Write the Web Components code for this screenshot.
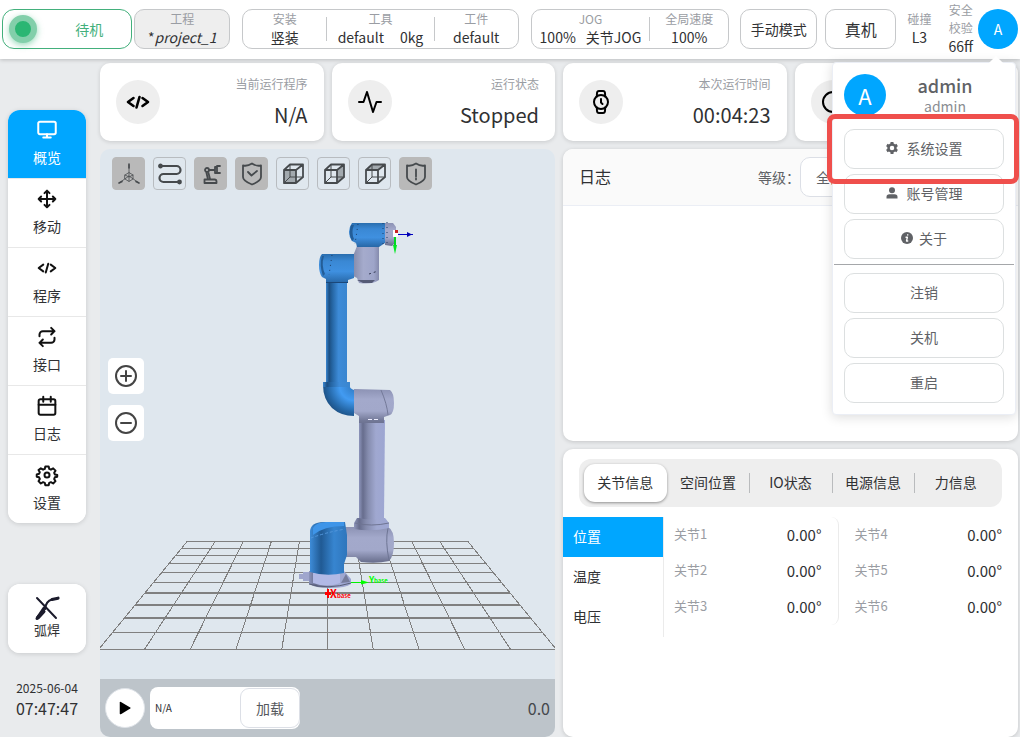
<!DOCTYPE html>
<html lang="zh-CN">
<head>
<meta charset="utf-8">
<title>机器人控制台</title>
<style>
  body { margin: 0; background: #e9ebed; color: #303133; font: 14px/20px "Noto Sans CJK SC", "Noto Sans", sans-serif; }
</style>
</head>
<body>
<robot-console></robot-console>
<script>
const BASE = `
  :host { display: block; box-sizing: border-box; }
  *, *::before, *::after { box-sizing: border-box; }
  button, input, select { font: inherit; color: inherit; margin: 0; padding: 0; background: #fff; border: 0; }
  h1, h2, p, dl, dt, dd, ul { margin: 0; padding: 0; list-style: none; font: inherit; }
`;
function define(name, css, html) {
  customElements.define(name, class extends HTMLElement {
    constructor() {
      super();
      const t = document.createElement('template');
      t.innerHTML = `<style>${BASE}${css}</style>${html}`;
      this.attachShadow({ mode: 'open' }).append(t.content.cloneNode(true));
    }
  });
}

const CUBE = '<path d="M3 8h12v13H3zM3 8l6-5.500h13L15 8M22 2.500V15l-7 6"/><path stroke-width="1" d="M9 2.500V15h13M9 15l-6 6"/>';
const ICONS = {
  monitor: '<rect x="1.500" y="2" width="21" height="15" rx="2"/><path d="M12 17v4M7.500 21h9"/>',
  move: '<path d="M5 9l-3 3 3 3M9 5l3-3 3 3M15 19l-3 3-3-3M19 9l3 3-3 3M2 12h20M12 2v20"/>',
  code: '<path d="M7.500 8L2 12l5.500 4M16.500 8l5.500 4-5.500 4M13.500 7l-3 10.500"/>',
  repeat: '<path d="M17 1l4 4-4 4M3 11V9a4 4 0 0 1 4-4h14M7 23l-4-4 4-4M21 13v2a4 4 0 0 1-4 4H3"/>',
  calendar: '<rect x="2" y="4" width="20" height="18.500" rx="2"/><path d="M16.500 1v6M7.500 1v6M2 10.500h20"/>',
  gear: '<circle cx="12" cy="12" r="3"/><path d="M10 1.700h4l.7 3 2 .9 2.700-1.600 2.800 2.800-1.600 2.600.9 2 2.800.7v.8l-.1 1.300-2.800.6-.8 2 1.600 2.600-2.800 2.800-2.700-1.600-2 .8-.7 3h-4l-.7-3-2-.8-2.700 1.600-2.800-2.800 1.600-2.600-.9-2-2.800-.8v-2.700l2.800-.7.9-2-1.600-2.600L4.600 4l2.700 1.600 2-.9z"/>',
  pulse: '<path d="M23 12h-4.500L15 22 9 2 5.500 12H1"/>',
  watch: '<circle cx="12" cy="12" r="7"/><path d="M12 9v3.500l1.500 1.500M7.800 6.500L8 3q.2-2 2-2h4q1.800 0 2 2l.2 3.500M7.800 17.500L8 21q.2 2 2 2h4q1.800 0 2-2l.2-3.500"/>',
  clock: '<circle cx="12" cy="12" r="10"/><path d="M12 6v6l4 2"/>',
  plus: '<circle cx="12" cy="12" r="10"/><path d="M12 7v10M7 12h10"/>',
  minus: '<circle cx="12" cy="12" r="10"/><path d="M7 12h10"/>',
  play: '<path fill="currentColor" stroke="none" d="M3 2.500q0-2 2-1L21 11q1.500 1 0 2L5 22.500q-2 1-2-1z"/>',
  axes: '<path stroke-width=".8" d="M12 3v11L2 21M12 14l10 7M8 13l4-2.500 4 2.500v4l-4 2.500L8 17zM8 13l4 2 4-2M12 15v4"/><path stroke-width="1.600" d="M12 2v4M2 21l3-1.500M22 21l-3-1.500"/>',
  path: '<path stroke-width="2.200" d="M2 4h16.500a4 4 0 0 1 0 8H5.500a4 4 0 0 0 0 8H22"/><circle cx="2.500" cy="4" r="1.500" fill="currentColor"/><circle cx="21.500" cy="20" r="1.500" fill="currentColor"/>',
  arm: '<path d="M5.500 17.500h10q2 0 2 2v1.500h-12zM9 17.500L7.500 11M11 17l-1.500-6M10 8h6M16 5v6h2M16 6l2.500-2H21M18 11h3M18 4v7"/><circle cx="8" cy="8" r="2"/>',
  shield: '<path d="M12 1.500Q7.500 4.500 3 3.500V15q0 4 9 7.500 9-3.500 9-7.500V3.500q-4.500 1-9-2zM8 10l3.500 3.500L17 9"/>',
  alert: '<path d="M12 1.500Q7.500 4.500 3 3.500V15q0 4 9 7.500 9-3.500 9-7.500V3.500q-4.500 1-9-2zM12 7.500v7M12 16.500v1"/>',
  cubeFront: '<path fill="#a2a9ae" stroke="none" d="M3 8h12v13H3z"/>' + CUBE,
  cubeSide: '<path fill="#a2a9ae" stroke="none" d="M15 8l7-5.500V15l-7 6z"/>' + CUBE,
  cubeTop: '<path fill="#a2a9ae" stroke="none" d="M3 8l6-5.500h13L15 8z"/>' + CUBE,
  cog: '<circle cx="12" cy="12" r="7" stroke-width="5"/><path stroke-linecap="butt" stroke-width="6" d="M12 0v5M12 19v5M1.600 6l4.400 2.500M18 15.500l4.400 2.500M1.600 18L6 15.500M18 8.500L22.400 6"/>',
  user: '<g fill="currentColor" stroke="none"><circle cx="12" cy="6.500" r="6"/><path d="M1 23v-3q0-5.500 6-5.500h10q6 0 6 5.500v3z"/></g>',
  info: '<circle cx="12" cy="12" r="12" fill="currentColor" stroke="none"/><path stroke="#fff" stroke-width="2.600" d="M10 10.500h2.800L11 18h2.500M13.500 5.500v.5"/>',
  torch: '<g stroke="#1b1b2c"><path stroke-width="2" d="M2 2l19 20"/><path stroke-width="3" d="M2 22.500L9 12"/><path stroke-width="4" d="M3 21.500l5.500-6"/><path stroke-width="2.200" d="M10 13Q11 5 17 3.500"/><path stroke-width="3.200" d="M17 3.500l6-1.300"/></g>',
};
customElements.define('ui-icon', class extends HTMLElement {
  constructor() {
    super();
    this.attachShadow({ mode: 'open' });
  }
  connectedCallback() {
    this.shadowRoot.innerHTML = `<style>
      :host { display: block; flex: none; width: var(--icon, 22px); height: var(--icon, 22px); }
      svg { display: block; width: 100%; height: 100%; overflow: visible; }
    </style><svg viewBox="0 0 24 24" fill="none" stroke="currentColor" stroke-width="${this.getAttribute('weight') || 2}"
      stroke-linecap="round" stroke-linejoin="round" aria-hidden="true">${ICONS[this.getAttribute('name')]}</svg>`;
  }
});

define('user-avatar', `
  :host { display: grid; place-items: center; flex: none; width: var(--avatar, 40px); height: var(--avatar, 40px);
    border-radius: 50%; background: #00a6ff; color: #fff; }
`, '<slot></slot>');

define('stat-field', `
  :host { display: block; text-align: center; white-space: nowrap; padding-bottom: 2px; }
  .label { font-size: 12px; line-height: 18px; color: #9a9da3; }
  .value { font-size: 14px; line-height: 18px; display: flex; justify-content: center; gap: var(--gap, 0); }
`, '<div class="label"><slot name="label"></slot></div><div class="value"><slot></slot></div>');

define('status-header', `
  :host { display: flex; align-items: center; height: 59px; padding: 0 2px 1px; background: #fff;
    box-shadow: 0 1px 4px rgba(0,0,0,.2); position: relative; }
  .box { height: 40px; border: 1px solid #c6c8ca; border-radius: 10px; background: #fff; display: flex; align-items: center; justify-content: center; }
  .state { flex: 130 1 0; border-color: #43b07c; border-radius: 12px; color: #43b07c; }
  .state span { flex: 1; text-align: center; padding-left: 10px; }
  .lamp { width: 28px; height: 28px; margin-left: 6px; border: 6px solid #82cfaa; border-radius: 50%; background: #2bb673; box-shadow: 0 2px 6px rgba(43,182,115,.5); }
  .project { flex: 95 1 0; margin-left: 2px; background: #eee; }
  .setup { flex: 278 1 0; margin-left: 12px; --gap: 16px; }
  .jog { flex: 199 1 0; margin-left: 12px; --gap: 10px; }
  .sep { width: 1px; height: 24px; background: #c6c8ca; }
  .mode { flex: 76 1 0; margin-left: 11px; white-space: nowrap; }
  .real { flex: 70 1 0; margin-left: 8px; font-size: 16px; }
  .hit { margin-left: 11px; }
  .safe { margin-left: 17px; }
  user-avatar { margin-left: 5px; font-size: 14px; }
`, `
  <div class="box state"><i class="lamp"></i><span>待机</span></div>
  <div class="box project"><stat-field><span slot="label">工程</span><span>*</span><em>project_1</em></stat-field></div>
  <div class="box setup">
    <stat-field style="flex:84"><span slot="label">安装</span><span>竖装</span></stat-field><i class="sep"></i>
    <stat-field style="flex:108"><span slot="label">工具</span><span>default</span><span>0kg</span></stat-field><i class="sep"></i>
    <stat-field style="flex:84"><span slot="label">工件</span><span>default</span></stat-field>
  </div>
  <div class="box jog">
    <stat-field style="flex:119"><span slot="label">JOG</span><span>100%</span><span>关节JOG</span></stat-field><i class="sep"></i>
    <stat-field style="flex:79"><span slot="label">全局速度</span><span>100%</span></stat-field>
  </div>
  <button class="box mode">手动模式</button>
  <button class="box real">真机</button>
  <stat-field class="hit"><span slot="label">碰撞</span><span>L3</span></stat-field>
  <stat-field class="safe"><span slot="label">安全<br>校验</span><span>66ff</span></stat-field>
  <user-avatar>A</user-avatar>
`);

define('side-bar', `
  :host { display: flex; flex-direction: column; padding: 51px 0 16px 8px; width: 86px; }
  nav, .app { background: #fff; border-radius: 12px; overflow: hidden; box-shadow: 0 1px 5px rgba(0,0,0,.14); }
  button { display: flex; flex-direction: column; align-items: center; width: 100%; height: 69px; padding-top: 10px; border-bottom: 1px solid #e8e8e8; }
  button span { line-height: 20px; margin-top: 7px; }
  button ui-icon { color: #111; }
  nav { --icon: 20px; }
  nav button:last-child { border: 0; height: 68px; }
  .on, .on ui-icon { background: #00a6ff; color: #fff; }
  .app { margin-top: 61px; --icon: 24px; }
  .app button { border: 0; padding-top: 12px; font-size: 13px; }
  .app span { margin-top: 0; }
  .clock { margin-top: 25px; text-align: center; }
  .clock p { font-size: 12px; line-height: 20px; }
  .clock p + p { font-size: 16px; line-height: 20px; }
`, `
  <nav aria-label="主菜单">
    ${[['monitor', '概览'], ['move', '移动'], ['code', '程序'], ['repeat', '接口'], ['calendar', '日志'], ['gear', '设置']]
      .map(([i, t], n) => `<button${n ? '' : ' class="on" aria-current="page"'}><ui-icon name="${i}" weight="2.4"></ui-icon><span>${t}</span></button>`).join('')}
  </nav>
  <div class="app"><button><ui-icon name="torch"></ui-icon><span>弧焊</span></button></div>
  <div class="clock"><p>2025-06-04</p><p>07:47:47</p></div>
`);

define('run-card', `
  :host { display: flex; align-items: center; justify-content: space-between; height: 78px; padding: 0 16px; min-width: 0;
    background: #fff; border-radius: 10px; box-shadow: 0 1px 4px rgba(0,0,0,.14); overflow: hidden; }
  .disc { width: 44px; height: 44px; border-radius: 50%; background: #eee; display: grid; place-items: center; color: #000; --icon: 24px; flex: none; }
  .text { text-align: right; white-space: nowrap; padding-bottom: 1px; }
  .label { font-size: 12px; line-height: 18px; color: #9a9da3; }
  .value { font-size: 20px; line-height: 28px; margin-top: 8px; }
`, '<div class="disc"><slot name="icon"></slot></div><div class="text"><div class="label"><slot name="label"></slot></div><div class="value"><slot></slot></div></div>');

/* Floor grid: ten cells seen in perspective, fanning out from the centre line. */
const rows = [541, 548, 555, 563, 572, 582, 593, 605, 618, 632, 649];
const floor = rows.map((y, i) => {
  const half = 140 + (y - 541) / 108 * 88;
  return `<path stroke-width="${i >= 6 && i <= 8 ? 2 : 1}" d="M${327.5 - half} ${y + (i >= 6 && i <= 8 ? 0 : .5)}H${327.5 + half}"/>`;
}).join('') + [-5, -4, -3, -2, -1, 0, 1, 2, 3, 4, 5].map(k => `<path d="M${327.5 + 28 * k} 541L${327.5 + 45.7 * k} 649"/>`).join('');
const grad = (id, stops, v) => `<linearGradient id="${id}" x1="0" y1="0" x2="${v ? 0 : 1}" y2="${v ? 1 : 0}">${stops.map(([o, c]) => `<stop offset="${o}" stop-color="${c}"/>`).join('')}</linearGradient>`;

define('robot-scene', `
  :host { display: flex; flex-direction: column; position: relative; min-height: 588px; border-radius: 10px; overflow: hidden; background: #dfe7ee; }
  .view { display: block; width: 100%; flex: 1 1 530px; min-height: 0; }
  .tools { position: absolute; left: 12px; top: 8px; display: flex; gap: 8px; --icon: 24px; }
  .tools button { width: 33px; height: 33px; border: 1px solid #b8bcc0; border-radius: 4px; background: #dfe7ee; color: #464a4d; display: grid; place-items: center; }
  .tools .on { background: #b9b9b9; border-color: #b9b9b9; }
  .zoom { position: absolute; left: 8px; top: 209px; display: grid; gap: 11px; --icon: 24px; }
  .zoom button { width: 36px; height: 36px; border-radius: 5px; display: grid; place-items: center; color: #444; }
  .bar { flex: none; height: 58px; background: #bdc4ca; display: flex; align-items: center; padding: 0 5px; gap: 5px; }
  .play { width: 40px; height: 40px; border-radius: 50%; border: 1px solid #dfe3e8; color: #000; display: grid; place-items: center; --icon: 14px; }
  .file { flex: 0 0 150px; height: 42px; border-radius: 8px; background: #fff; display: flex; align-items: center; }
  .file input { width: 90px; padding-left: 5px; background: none; font-size: 10px; line-height: 20px; }
  .file button { width: 60px; height: 40px; border: 1px solid #dcdfe6; border-radius: 9px; color: #55585c; }
  output { margin-left: auto; font-size: 16px; color: #45484c; }
`, `
  <svg class="view" viewBox="100 149 455 530" role="img" aria-label="机器人三维视图">
    <defs>
      ${grad('bt', [[0, '#3a86d0'], [.15, '#1c4f82'], [.3, '#2565a3'], [.6, '#3d8bd8'], [1, '#3a86cf']])}
      ${grad('bh', [[0, '#2a6eae'], [.25, '#3a88d4'], [.6, '#3f90e0'], [1, '#2767a6']], 1)}
      ${grad('bb', [[0, '#3e8cd8'], [.3, '#205a94'], [.65, '#3785d0'], [1, '#2f76bc']])}
      ${grad('gt', [[0, '#8d95bb'], [.15, '#676d8d'], [.35, '#858cae'], [.65, '#a0a8d0'], [1, '#9da6d2']])}
      ${grad('gh', [[0, '#8c92b4'], [.3, '#a3a9cb'], [.65, '#a2a8ca'], [1, '#666c8a']], 1)}
      ${grad('gm', [[0, '#858baa'], [.4, '#a5abcc'], [.8, '#9ea5c9'], [1, '#858bad']])}
      <radialGradient id="be" gradientUnits="userSpaceOnUse" cx="354" cy="386" r="32"><stop offset="0" stop-color="#2f78bf"/><stop offset=".45" stop-color="#429bf2"/><stop offset=".8" stop-color="#2568a8"/><stop offset="1" stop-color="#1c4f82"/></radialGradient>
    </defs>
    <g stroke="#808080" fill="none" shape-rendering="crispEdges">${floor}</g>
    <path fill="#9fa6cd" d="M299 574h4v-2h8v9h-8v-2h-4z"/>
    <path fill="url(#gt)" d="M309 571h35l7 8v5q-5 4-21 4-15 0-21-4z"/>
    <path fill="#b1b9e5" d="M313 573h27v10q-13 5-27 0z"/>
    <path fill="#767c9b" d="M341 583l5-9 4 8z"/><path stroke="#585e77" fill="none" d="M309 584q19 6 42-1"/>
    <path fill="url(#gh)" d="M345 527h43q6 3 6 16t-5 18q-12 3-28 1l-5-5h-11z"/>
    <path stroke="#6e7594" fill="none" d="M388 528q-3 13 1 32"/>
    <path fill="url(#gt)" d="M357 518h28l4 5v5q-17 4-35 1v-6z"/>
    <path stroke="#6f7593" fill="none" d="M355 523q16 4 34 0"/>
    <path fill="url(#gt)" d="M359 420h26l-1 98q-12 3-25 0z"/>
    <path fill="url(#bb)" d="M310 572v-40q0-10 14-10h21l2 13v20l-3 9v9q-18 4-34-1z"/>
    <path fill="#3f95e8" d="M313 528q3-6 13-6h18v4q-20 0-31 9z"/>
    <path stroke="#5297dc" stroke-dasharray="3 2" fill="none" d="M311 538q13-5 34-9"/>
    <path fill="url(#gh)" d="M354 389l36 1q4 3 4 13t-4 12l-6 2v6h-25v-7l-5-3z"/>
    <path stroke="#747a99" fill="none" d="M381 390q6 14 7 25M359 422h25"/>
    <path stroke="#eef" stroke-dasharray="4 2" fill="none" d="M368 419.500h10"/>
    <path fill="url(#be)" d="M323 385h26q1 4 5 5v26q-13 0-22-8-9-9-9-23z"/>
    <path fill="url(#bt)" d="M326 280h21v103h-21z"/><path fill="url(#bt)" d="M323 382h27v5h-27z"/>
    <path fill="url(#gm)" d="M357 246h22v34q-7 5-20 3l-2-5-4-2v-20z"/>
    <path fill="#555b76" d="M357 280h18l-3 3h-9z"/><path stroke="#333953" stroke-dasharray="2 3" fill="none" d="M369 274l9-3"/>
    <path fill="url(#bh)" d="M322 254h32v24l-6 2v3h-22v-4l-4-2q-3-4-3-12t3-11z"/>
    <path fill="#235d97" d="M322 256q-3 9 1 20l2-2q-4-9-1-18z"/><path stroke="#1b4778" fill="none" d="M326 282.500h22"/>
    <path fill="url(#bh)" d="M352 223h33v20l-6 4h-22l-1-4-4-2q-3-4-3-9t3-9z"/>
    <path fill="#235d97" d="M351 225q-3 9 1 16l2-2q-3-7 0-14z"/>
    <path fill="url(#gh)" d="M385 223h8l3 4v15l-4 4-7-1z"/>
    <path stroke="#1d3c66" stroke-dasharray="1 4" fill="none" d="M358 224l-3 20M383 223v22M332 255l-3 20M387 222v24"/>
    <path fill="#fff" d="M393 230h5v7h-5z"/><path fill="#c22" d="M395 230h3v3h-3z"/>
    <path stroke="#0000c8" fill="none" d="M398 234.500h15"/><path fill="#0000b0" d="M407 232l5 2.500-5 2.500z"/>
    <path stroke="#00d820" stroke-width="2" d="M395 237v11"/><path fill="#00e820" d="M393 245h4l-2 9z"/>
    <path stroke="#00f000" d="M351 582.500h12"/><path fill="#0f0" d="M361 580l8 2.500-8 2z"/>
    <path fill="#f00" d="M325 592h2v-3h2v3h2v3h-2v3h-2v-3h-2z"/>
    <g font-family="Noto Sans CJK SC, sans-serif" font-weight="700"><g fill="#f00"><text x="330" y="598" font-size="11">X</text><text x="337" y="598" font-size="6">base</text></g>
    <g fill="#0f0"><text x="369" y="583" font-size="9">Y</text><text x="374" y="583" font-size="6">base</text></g></g>
  </svg>
  <div class="tools">
    ${[['axes', 1, '坐标轴'], ['path', 0, '轨迹'], ['arm', 1, '模型'], ['shield', 1, '安全'], ['cubeFront', 0, '前视图'], ['cubeSide', 0, '侧视图'], ['cubeTop', 0, '顶视图'], ['alert', 1, '警告']]
      .map(([i, on, t]) => `<button aria-label="${t}"${on ? ' class="on"' : ''}><ui-icon name="${i}" weight="1.8"></ui-icon></button>`).join('')}
  </div>
  <div class="zoom"><button aria-label="放大"><ui-icon name="plus"></ui-icon></button><button aria-label="缩小"><ui-icon name="minus"></ui-icon></button></div>
  <div class="bar">
    <button class="play" aria-label="运行"><ui-icon name="play"></ui-icon></button>
    <div class="file"><input aria-label="程序文件" value="N/A" readonly><button>加载</button></div>
    <output>0.0</output>
  </div>
`);

define('log-panel', `
  :host { background: #fff; border-radius: 10px; overflow: hidden; height: 292px; box-shadow: 0 1px 4px rgba(0,0,0,.16); }
  header { display: flex; align-items: center; height: 57px; padding: 0 16px; background: #fafafa; border-bottom: 1px solid #ebeef5; }
  h2 { font-size: 16px; line-height: 24px; flex: 1; padding-bottom: 2px; }
  label { color: #606266; }
  select { width: 202px; height: 40px; border: 1px solid #dcdfe6; border-radius: 10px; padding-left: 15px; color: #606266; appearance: none; }
`, `<header><h2>日志</h2><label for="level">等级：</label><select id="level"><option>全部</option></select></header>`);

define('joint-panel', `
  :host { background: #fff; border-radius: 10px; padding-top: 10px; box-shadow: 0 1px 4px rgba(0,0,0,.16); overflow: hidden; }
  .tabs { display: flex; height: 48px; margin: 0 16px; padding: 5px; background: #eee; border-radius: 12px; }
  .tabs button { flex: 1 1 0; min-width: 0; background: none; white-space: nowrap; position: relative; padding-bottom: 2px; }
  .tabs .on { background: #fff; border-radius: 11px; box-shadow: 0 1px 3px rgba(0,0,0,.4); height: 38px; }
  .tabs button:nth-child(n+3)::before { content: ""; position: absolute; left: 0; top: 9px; width: 1px; height: 20px; background: #b9bbbd; }
  .body { display: flex; align-items: flex-start; margin-top: 10px; padding-right: 6px; }
  nav { flex: 0 0 101px; border-right: 1px solid #ebebeb; }
  nav button { display: block; width: 100px; height: 40px; padding: 0 0 2px 10px; text-align: left; }
  nav .on { background: #00a6ff; color: #fff; }
  dl { flex: 1 1 0; padding: 0 10px 0 16px; }
  dl:first-of-type { padding: 0 16px 0 10px; border-right: 1px solid #ebebeb; border-radius: 8px; }
  dl div { display: flex; justify-content: space-between; align-items: center; height: 36px; }
  dt { font-size: 13px; color: #9a9da3; padding-bottom: 2px; }
  dd { font-size: 15px; }
`, `
  <div class="tabs" role="tablist">${['关节信息', '空间位置', 'IO状态', '电源信息', '力信息'].map((t, i) => `<button role="tab"${i ? '' : ' class="on" aria-selected="true"'}>${t}</button>`).join('')}</div>
  <div class="body">
    <nav><button class="on">位置</button><button>温度</button><button>电压</button></nav>
    ${[[1, 2, 3], [4, 5, 6]].map(c => `<dl>${c.map(n => `<div><dt>关节${n}</dt><dd>0.00°</dd></div>`).join('')}</dl>`).join('')}
  </div>
`);

define('user-menu', `
  :host { background: #fff; border: 1px solid #ebeef5; border-radius: 4px; padding: 11px; box-shadow: 0 2px 12px rgba(0,0,0,.14); color: #606266; }
  :host::before { content: ""; position: absolute; right: 14px; top: -5px; width: 10px; height: 10px; background: #fff; transform: rotate(45deg); }
  .who { display: flex; align-items: center; height: 42px; --avatar: 42px; }
  user-avatar { font-size: 22px; }
  .who div { flex: 1; text-align: center; padding-bottom: 1px; }
  h2 { font-size: 18px; line-height: 22px; font-weight: 500; }
  .who p { line-height: 20px; color: #8a8d92; }
  ul { display: grid; gap: 5px; }
  .top { margin-top: 13px; }
  .end { margin-top: 8px; }
  hr { margin: 5px -10px 0; border: 0; height: 1px; background: #a5a7aa; }
  li { position: relative; }
  button { width: 100%; height: 40px; padding-bottom: 2px; border: 1px solid #dcdfe0; border-radius: 10px; display: flex; align-items: center; justify-content: center; gap: 9px; --icon: 12px; }
  .about { gap: 6px; }
  .marked { z-index: 1; }
  .marked::after { content: ""; position: absolute; inset: -15px -15px -15px -17px; border: 5px solid #ef4f4c; border-radius: 8px; pointer-events: none; }
`, `
  <div class="who"><user-avatar>A</user-avatar><div><h2>admin</h2><p>admin</p></div></div>
  <ul class="top">
    <li class="marked"><button><ui-icon name="cog"></ui-icon>系统设置</button></li>
    <li><button><ui-icon name="user"></ui-icon>账号管理</button></li>
    <li><button class="about"><ui-icon name="info"></ui-icon>关于</button></li>
  </ul>
  <hr>
  <ul class="end"><li><button>注销</button></li><li><button>关机</button></li><li><button>重启</button></li></ul>
`);

define('robot-console', `
  :host { display: flex; flex-direction: column; min-height: 100vh; position: relative; }
  status-header { z-index: 1; }
  .page { flex: 1; display: flex; gap: 14px; padding-right: 2px; }
  side-bar { flex: 0 0 86px; }
  main { flex: 1; min-width: 0; display: grid; grid-template-columns: repeat(4, minmax(0, 1fr)); grid-template-rows: auto 1fr; gap: 8px; padding-top: 4px; }
  robot-scene, .right { grid-column: span 2; }
  .right { display: flex; flex-direction: column; gap: 8px; }
  joint-panel { flex: 1; }
  user-menu { position: absolute; z-index: 2; right: 4px; top: 62px; width: 184px; }
`, `
  <status-header></status-header>
  <div class="page">
    <side-bar></side-bar>
    <main>
      <run-card><ui-icon slot="icon" name="code" weight="2.6"></ui-icon><span slot="label">当前运行程序</span>N/A</run-card>
      <run-card><ui-icon slot="icon" name="pulse"></ui-icon><span slot="label">运行状态</span>Stopped</run-card>
      <run-card><ui-icon slot="icon" name="watch"></ui-icon><span slot="label">本次运行时间</span>00:04:23</run-card>
      <run-card><ui-icon slot="icon" name="clock"></ui-icon></run-card>
      <robot-scene></robot-scene>
      <div class="right"><log-panel></log-panel><joint-panel></joint-panel></div>
    </main>
  </div>
  <user-menu></user-menu>
`);
</script>
</body>
</html>
